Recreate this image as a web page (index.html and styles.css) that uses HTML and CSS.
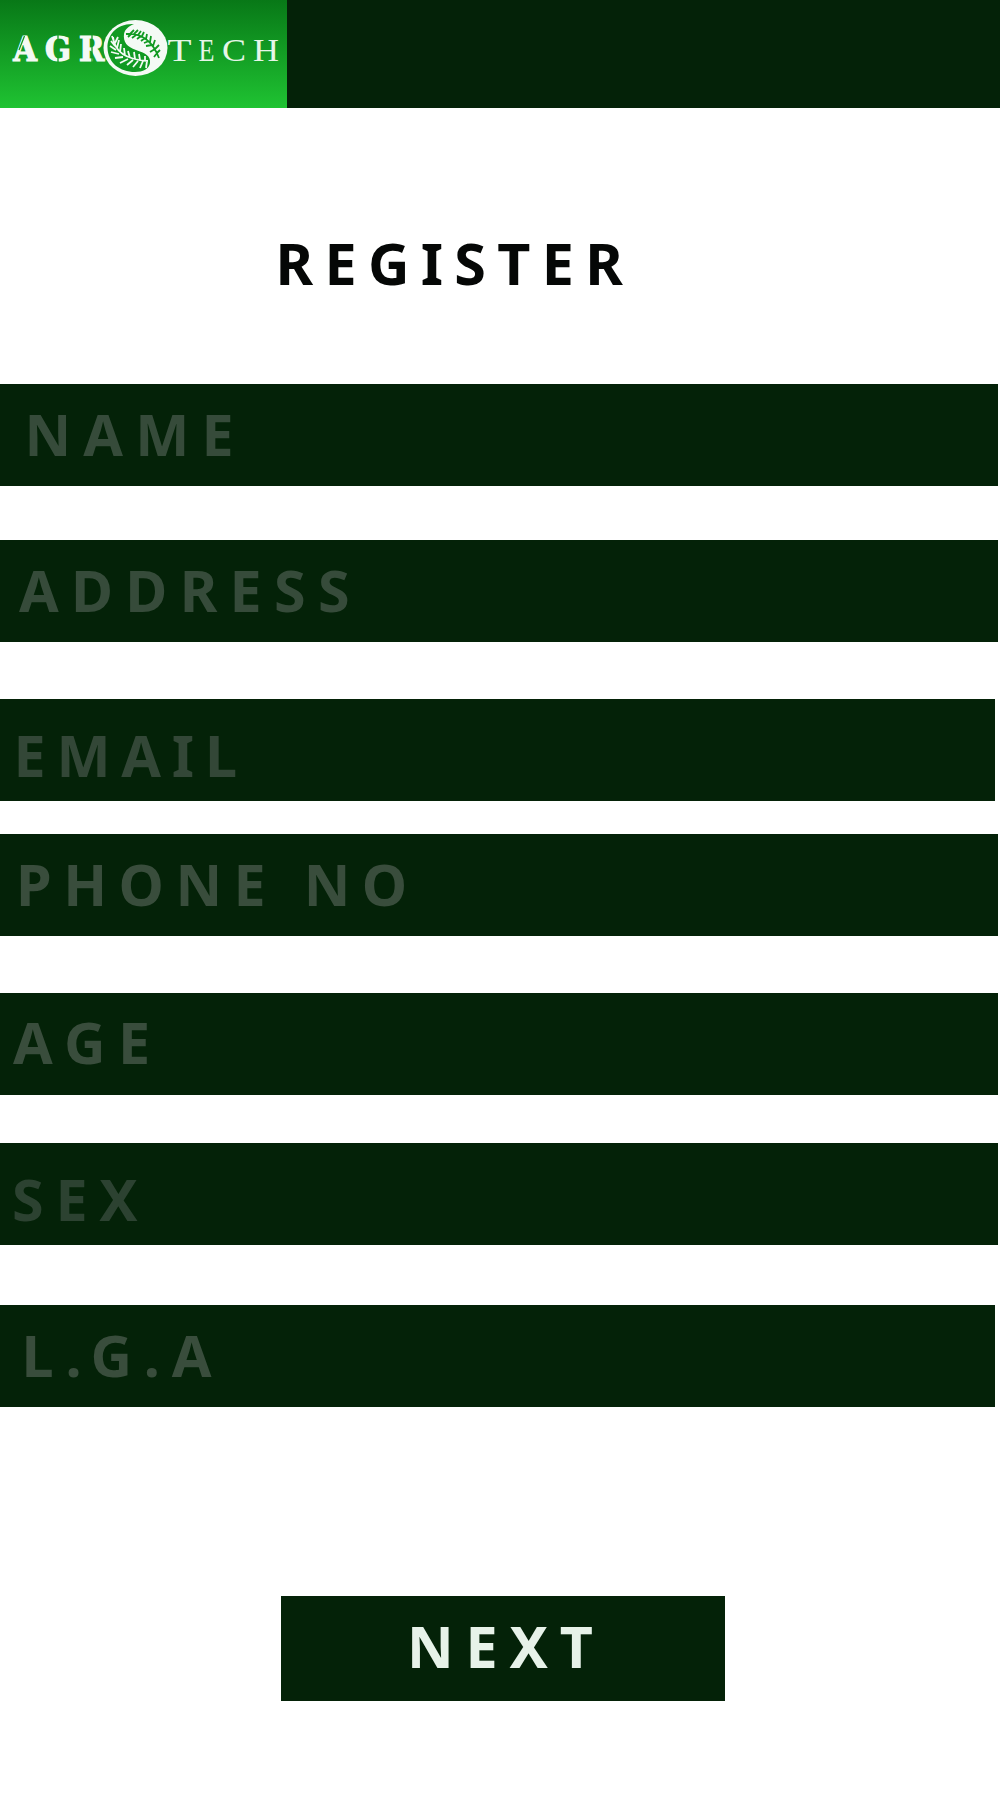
FILE: index.html
```html
<!DOCTYPE html>
<html lang="en">
<head>
<meta charset="utf-8">
<title>Agrotech – Register</title>
<link rel="stylesheet" href="styles.css">
</head>
<body>
<header class="header">
  <svg class="logo" viewBox="0 0 287 108" role="img" aria-label="Agrotech">
    <text class="logo-agr" y="60.500" x="13.200 45 79">AGR</text>
    <path class="gap" stroke-width="1.300" d="M19 50L24.500 36M58 33.500v6M58 56.500v6M92 34v28"/>
    <text class="logo-tech" y="61"><tspan x="167.500" textLength="24" lengthAdjust="spacingAndGlyphs">T</tspan><tspan x="198.500" textLength="16" lengthAdjust="spacingAndGlyphs">E</tspan><tspan x="222" textLength="24" lengthAdjust="spacingAndGlyphs">C</tspan><tspan x="253" textLength="26" lengthAdjust="spacingAndGlyphs">H</tspan></text>
    <ellipse class="disc" cx="135.500" cy="48" rx="32" ry="28"/>
    <path class="leaf-bg" d="M134 24C117 23 107 35 107.500 48C108 63 120 72 135 72C143 72 149 69 150 63C151 56 145 53 136 50C127 47 123 42 124 34C125 29 129 26 134 24Z"/>
    <path class="frond-light" d="M113 37Q115 59 148 61M114 42l-2-6M115 46l-4-5M116 50l-6-4M119 54l-8-2M123 57l-8 1M128 59l-8 4M133 60l-6 5M138 61l-5 6M143 61l-3 7M147 61l-1 7M115 43l3-6M117 48l2-8M120 52l1-8M125 56l-1-8M130 58l-2-7M135 59l-1-7M140 60l-1-6M145 61l0-5"/>
    <path class="frond-dark" d="M126 34Q149 32 159 58M130 34l4-4M134 34l4-4M138 35l3-4M142 36l2-4M146 39l1-5M150 42l1-6M153 46l2-6M155 49l4-4M157 53l3-3M131 34l-3 3M136 35l-4 3M141 36l-4 3M145 38l-4 3M149 41l-5 2M152 45l-6 1M155 49l-5 3M157 53l-3 4"/>
  </svg>
</header>
<main class="page">
  <h1 class="title">REGISTER</h1>
  <form class="form">
    <div class="field name">NAME</div>
    <div class="field address">ADDRESS</div>
    <div class="field email">EMAIL</div>
    <div class="field phone">PHONE NO</div>
    <div class="field age">AGE</div>
    <div class="field sex">SEX</div>
    <div class="field lga">L.G.A</div>
    <button class="next" type="button">NEXT</button>
  </form>
</main>
</body>
</html>
```
FILE: styles.css
```css
* { box-sizing: border-box; }
body { margin: 0; min-height: 1800px; background: #fff; font-family: "Noto Sans", "Open Sans", sans-serif; }
.header { height: 108px; background: #042208; }
.logo { display: block; width: 287px; height: 108px; background: linear-gradient(#087817, #1fc332); }
.logo-agr { font: bold 33.8px "DejaVu Serif Condensed", "DejaVu Serif", serif; font-stretch: condensed; fill: #f4faf5; stroke: #f4faf5; stroke-width: 1.2; }
.logo-tech { font: 32px "Liberation Serif", serif; fill: #e6f6e8; }
.gap { stroke: #109a21; fill: none; }
.disc { fill: #f4faf5; }
.leaf-bg { fill: #109a22; }
.frond-light { fill: none; stroke: #f4faf5; stroke-width: 1.8; }
.frond-dark { fill: none; stroke: #109a22; stroke-width: 1.8; }
.title, .field, .next { font-size: 57.4px; font-weight: 700; line-height: 78px; letter-spacing: 11.8px; white-space: nowrap; }
.title { margin: 0; padding: 116px 0 0 275.5px; height: 276px; color: #050706; letter-spacing: 11.3px; }
.form { display: flex; flex-direction: column; }
.field { width: 998px; height: 102px; background: #042208; color: #364b3a; }
.name { padding: 11px 0 0 24.5px; margin-bottom: 54px; letter-spacing: 12.2px; }
.address { padding: 11px 0 0 19px; margin-bottom: 57px; letter-spacing: 12.3px; }
.email { width: 995px; padding: 17px 0 0 13.5px; margin-bottom: 33px; color: #334737; letter-spacing: 10.8px; }
.phone { padding: 11px 0 0 16px; margin-bottom: 57px; color: #394d3c; letter-spacing: 11.5px; }
.age { padding: 10px 0 0 13px; margin-bottom: 48px; color: #394d3c; letter-spacing: 12.4px; }
.sex { padding: 17px 0 0 12px; margin-bottom: 60px; color: #2c4231; }
.lga { width: 995px; padding: 11px 0 0 21.5px; margin-bottom: 189px; color: #394d3c; }
.next { width: 444px; height: 105px; margin: 0 0 0 281px; padding: 0 0 5px 126px; border: 0; background: #042208; color: #e7f2e9; font-family: inherit; text-align: left; }
```
